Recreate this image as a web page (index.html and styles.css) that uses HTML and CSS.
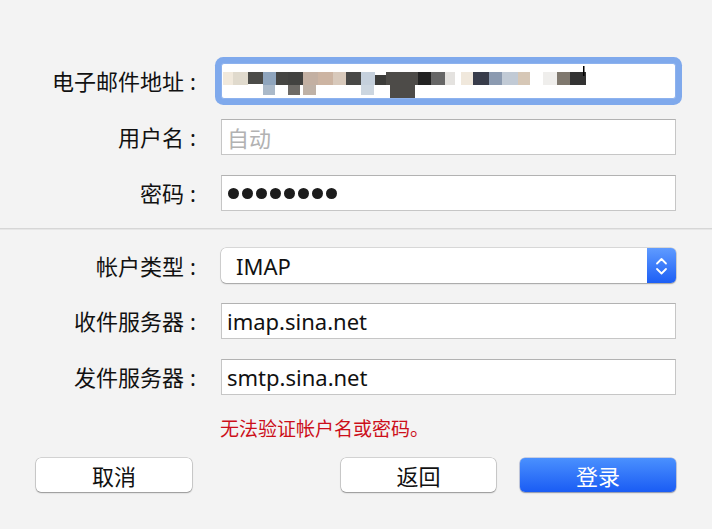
FILE: index.html
```html
<!DOCTYPE html>
<html lang="zh-CN">
<head>
<meta charset="utf-8">
<title>添加帐户</title>
<link rel="stylesheet" href="styles.css">
</head>
<body>
<div class="sheet">
  <section class="group">
    <div class="row">
      <label class="label">电子邮件地址<span class="colon">:</span></label>
      <div class="field focused">
        <svg class="mosaic" width="453" height="34" viewBox="1 1 453 34" aria-label="已模糊的电子邮件地址">
          <rect x="2" y="9" width="10" height="13" fill="#f1e9dc"/>
          <rect x="12" y="9" width="15" height="13" fill="#e0dacd"/>
          <rect x="27" y="9" width="15" height="12" fill="#4b4b48"/>
          <rect x="42" y="9" width="13" height="13" fill="#8fa5bd"/>
          <rect x="42" y="22" width="12" height="10" fill="#aab9c9"/>
          <rect x="55" y="9" width="12" height="13" fill="#454542"/>
          <rect x="67" y="9" width="17" height="13" fill="#424240"/>
          <rect x="67" y="22" width="12" height="10" fill="#6d6a66"/>
          <rect x="82" y="9" width="15" height="13" fill="#c3b0a2"/>
          <rect x="82" y="22" width="13" height="10" fill="#bfb2a7"/>
          <rect x="97" y="9" width="15" height="13" fill="#ccb4a2"/>
          <rect x="112" y="9" width="13" height="13" fill="#d8c9bb"/>
          <rect x="125" y="9" width="15" height="13" fill="#484846"/>
          <rect x="140" y="9" width="14" height="13" fill="#c5d0dc"/>
          <rect x="140" y="22" width="13" height="10" fill="#ccd6e0"/>
          <rect x="154" y="12" width="11" height="10" fill="#3c3c3a"/>
          <rect x="165" y="9" width="32" height="13" fill="#4d4b48"/>
          <rect x="169" y="22" width="25" height="13" fill="#4d4b48"/>
          <rect x="197" y="9" width="13" height="13" fill="#222222"/>
          <rect x="210" y="9" width="14" height="13" fill="#666666"/>
          <rect x="224" y="9" width="10" height="13" fill="#e4e2df"/>
          <rect x="240" y="9" width="12" height="13" fill="#f0e8dc"/>
          <rect x="252" y="9" width="16" height="13" fill="#383c4a"/>
          <rect x="268" y="9" width="13" height="13" fill="#8b9ab0"/>
          <rect x="281" y="9" width="16" height="13" fill="#c1cad5"/>
          <rect x="297" y="9" width="12" height="13" fill="#d6c7b6"/>
          <rect x="322" y="9" width="14" height="13" fill="#efeeec"/>
          <rect x="336" y="9" width="13" height="13" fill="#7f786e"/>
          <rect x="349" y="9" width="16" height="13" fill="#333333"/>
          <rect x="362" y="3" width="1.5" height="10" fill="#000000"/>
        </svg>
      </div>
    </div>
    <div class="row">
      <label class="label">用户名<span class="colon">:</span></label>
      <div class="field"><span class="placeholder">自动</span></div>
    </div>
    <div class="row">
      <label class="label">密码<span class="colon">:</span></label>
      <div class="field">
        <span class="dots">
          <span class="dot"></span><span class="dot"></span><span class="dot"></span><span class="dot"></span><span class="dot"></span><span class="dot"></span><span class="dot"></span><span class="dot"></span>
        </span>
      </div>
    </div>
  </section>

  <div class="divider"></div>

  <section class="group">
    <div class="row">
      <label class="label">帐户类型<span class="colon">:</span></label>
      <div class="popup">
        <span class="popup-text">IMAP</span>
        <span class="popup-arrows">
          <svg width="29" height="36" viewBox="0 0 29 36">
            <polyline points="10,15.5 14.5,11 19,15.5" fill="none" stroke="#ffffff" stroke-width="1.8" stroke-linecap="round" stroke-linejoin="round"/>
            <polyline points="10,21 14.5,25.5 19,21" fill="none" stroke="#ffffff" stroke-width="1.8" stroke-linecap="round" stroke-linejoin="round"/>
          </svg>
        </span>
      </div>
    </div>
    <div class="row">
      <label class="label">收件服务器<span class="colon">:</span></label>
      <div class="field"><span class="value">imap.sina.net</span></div>
    </div>
    <div class="row">
      <label class="label">发件服务器<span class="colon">:</span></label>
      <div class="field"><span class="value">smtp.sina.net</span></div>
    </div>
  </section>

  <p class="error">无法验证帐户名或密码。</p>

  <div class="buttons">
    <button class="btn">取消</button>
    <button class="btn push">返回</button>
    <button class="btn primary">登录</button>
  </div>
</div>
</body>
</html>
```

FILE: styles.css
```css
* {
  box-sizing: border-box;
}

html, body {
  margin: 0;
  padding: 0;
  background: #f3f3f3;
}

body {
  width: 712px;
  height: 529px;
  overflow: hidden;
  font-family: "Noto Sans", "Noto Sans CJK SC", sans-serif;
  color: #111111;
}

.sheet {
  display: flex;
  flex-direction: column;
  padding-top: 63px;
}

.group {
  display: flex;
  flex-direction: column;
  gap: 20px;
}

.row {
  display: grid;
  grid-template-columns: 196px 455px;
  column-gap: 25px;
  align-items: center;
}

.label {
  text-align: right;
  font-size: 22px;
  line-height: 26px;
  white-space: nowrap;
  color: #111111;
}

.colon {
  margin-left: 6px;
}

.field {
  height: 36px;
  background: #ffffff;
  border: 1px solid #c6c6c6;
  border-top-color: #b2b2b2;
  display: flex;
  align-items: center;
  padding: 0 5px;
  font-size: 22px;
}

.field.focused {
  padding: 0;
  border-color: #8db2ee;
  border-radius: 3px;
  box-shadow: 0 0 0 6px #7fa9ec;
}

.mosaic {
  display: block;
}

.placeholder {
  color: #b2b2b2;
  font-family: "Noto Sans CJK SC", sans-serif;
  font-size: 22px;
}

.value {
  color: #111111;
  font-size: 22px;
}

.dots {
  display: flex;
  gap: 3px;
  margin-left: 1px;
}

.dot {
  width: 11px;
  height: 11px;
  border-radius: 50%;
  background: #1c1c1c;
}

.divider {
  height: 2px;
  margin: 17px 0 18px;
  border-top: 1px solid #d6d6d6;
  border-bottom: 1px solid #e6e6e6;
}

.popup {
  height: 35px;
  display: flex;
  align-items: stretch;
  background: #ffffff;
  border-radius: 5px;
  box-shadow: 0 0 0 0.5px rgba(0, 0, 0, 0.22), 0 1px 1.5px rgba(0, 0, 0, 0.25);
  overflow: hidden;
}

.popup-text {
  flex: 1;
  display: flex;
  align-items: center;
  padding-left: 15px;
  font-size: 22px;
  color: #111111;
}

.popup-arrows {
  width: 29px;
  display: flex;
  align-items: center;
  justify-content: center;
  background: linear-gradient(#5f9bff, #1d5ff5);
}

.popup-arrows svg {
  display: block;
}

.error {
  margin: 21px 0 0 220px;
  font-family: "Noto Sans CJK SC", sans-serif;
  font-size: 19px;
  line-height: 24px;
  color: #cc0f1a;
}

.buttons {
  display: flex;
  align-items: center;
  gap: 24px;
  margin-top: 18px;
  padding: 0 36px;
}

.btn {
  width: 156px;
  height: 34px;
  border: none;
  border-radius: 5px;
  background: #ffffff;
  box-shadow: 0 0 0 0.5px rgba(0, 0, 0, 0.25), 0 1px 1.5px rgba(0, 0, 0, 0.3);
  font-family: "Noto Sans CJK SC", sans-serif;
  font-size: 22px;
  line-height: 30px;
  color: #111111;
  padding: 0;
}

.btn.push {
  margin-left: auto;
  width: 155px;
}

.btn.primary {
  color: #ffffff;
  background: linear-gradient(#4a90fe, #1a5cf4);
  box-shadow: 0 0 0 0.5px rgba(0, 40, 160, 0.35), 0 1px 1.5px rgba(0, 0, 0, 0.3);
}
```
